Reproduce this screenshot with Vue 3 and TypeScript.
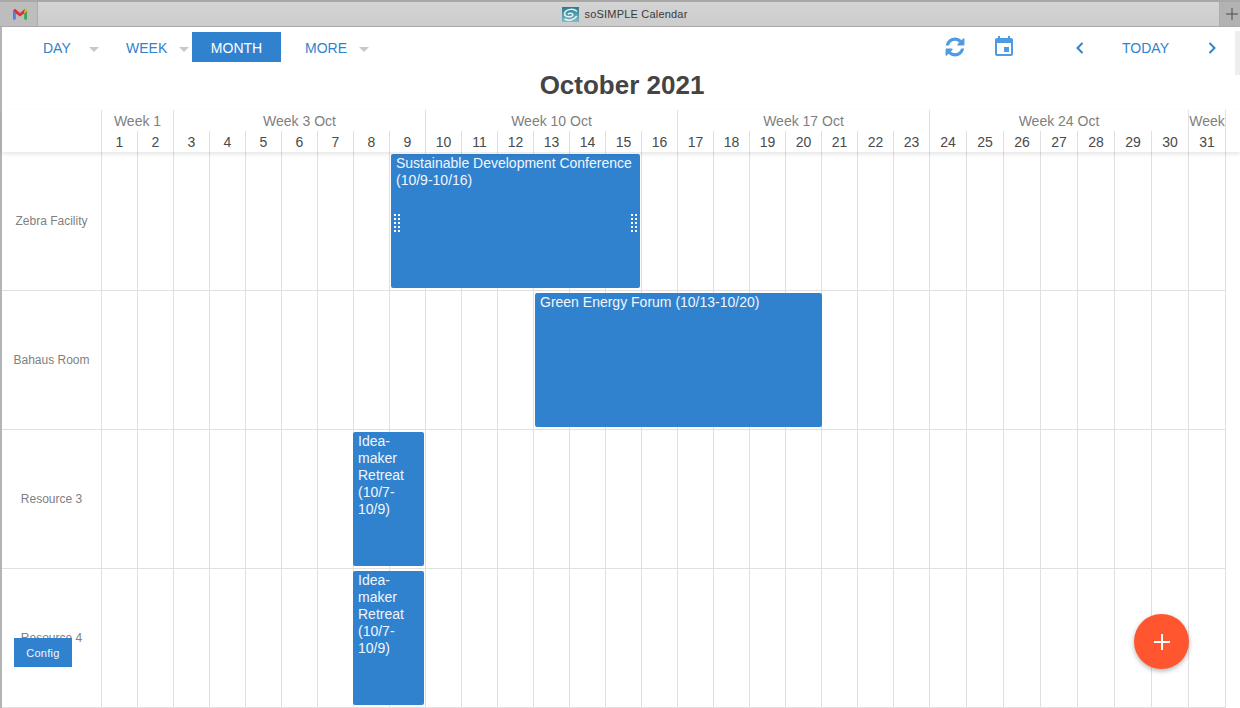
<script setup lang="ts">
type Day = { n: number; w: number };
type Week = { label: string; days: number };
type CalEvent = {
  title: string;
  start: number;
  span: number;
  left: number;
  right: number;
  grips?: boolean;
};
type Resource = { name: string; events: CalEvent[] };

// day columns: most are 36px, the last full week is 37px
const days: Day[] = Array.from({ length: 31 }, (_, i) => ({
  n: i + 1,
  w: i >= 23 ? 37 : 36,
}));

const weeks: Week[] = [
  { label: "Week 1", days: 2 },
  { label: "Week 3 Oct", days: 7 },
  { label: "Week 10 Oct", days: 7 },
  { label: "Week 17 Oct", days: 7 },
  { label: "Week 24 Oct", days: 7 },
  { label: "Week", days: 1 },
];

const retreat = "Idea-maker Retreat (10/7-10/9)";

const resources: Resource[] = [
  {
    name: "Zebra Facility",
    events: [
      {
        title: "Sustainable Development Conference (10/9-10/16)",
        start: 9,
        span: 7,
        left: 2,
        right: 1,
        grips: true,
      },
    ],
  },
  {
    name: "Bahaus Room",
    events: [{ title: "Green Energy Forum (10/13-10/20)", start: 13, span: 8, left: 2, right: -1 }],
  },
  {
    name: "Resource 3",
    events: [{ title: retreat, start: 8, span: 2, left: 0, right: 1 }],
  },
  {
    name: "Resource 4",
    events: [{ title: retreat, start: 8, span: 2, left: 0, right: 1 }],
  },
];

const dayColumns = days.map((d) => d.w + "px").join(" ");
const weekColumn = (i: number) => {
  const before = weeks.slice(0, i).reduce((sum, w) => sum + w.days, 0);
  return `${before + 1} / span ${weeks[i].days}`;
};
</script>

<template>
  <div class="window">
    <header class="titlebar">
      <div class="tab-icon">
        <svg width="16" height="14" viewBox="0 0 16 14">
          <path d="M1 3.5V12.5H3.8V6.5Z" fill="#4a80e8" />
          <path d="M15 3.5V12.5H12.2V6.5Z" fill="#34a853" />
          <path d="M1 3.5 3 1.8 8 6 13 1.8 12.2 6.5 8 9.5 3.8 6.5Z" fill="#dc3040" />
          <path d="M13 1.8 15 3.5 12.2 6.5Z" fill="#f4b400" />
        </svg>
      </div>
      <div class="title">
        <svg class="app-logo" width="17" height="15" viewBox="0 0 17 15">
          <defs>
            <linearGradient id="logo-bg" x1="0" y1="0" x2="0" y2="1">
              <stop offset="0" stop-color="#2c7a8e" />
              <stop offset="1" stop-color="#7fbcc8" />
            </linearGradient>
          </defs>
          <rect width="17" height="15" fill="url(#logo-bg)" />
          <path d="M15 4.5C12 1.5 5 1.5 2.8 5.5 1.5 9 5.5 10.5 9 9.5 11.5 8.7 11.5 6.5 9 6.2 7.5 6 6.5 6.6 6 7.2" fill="none" stroke="#e4f3f5" stroke-width="1.5" />
          <path d="M2.5 12C6 14 12 13.5 14.8 9" fill="none" stroke="#e4f3f5" stroke-width="1.5" />
        </svg>
        <span>soSIMPLE Calendar</span>
      </div>
      <div class="tab-add">
        <svg width="12" height="12" viewBox="0 0 12 12">
          <path d="M6 0V12M0 6H12" stroke="#4a4a4a" stroke-width="1" />
        </svg>
      </div>
    </header>

    <main class="page">
      <nav class="toolbar">
        <div class="views">
          <button class="view view-day">DAY<i class="caret"></i></button>
          <button class="view view-week">WEEK<i class="caret"></i></button>
          <button class="view view-month">MONTH</button>
          <button class="view view-more">MORE<i class="caret"></i></button>
        </div>
        <div class="actions">
          <svg class="icon-refresh" width="22" height="22" viewBox="0 0 1792 1792">
            <path
              fill="#4e9be3"
              d="M1639 1056q0 5-1 7-64 268-268 434.5t-478 166.5q-146 0-282.5-55t-243.5-157l-129 129q-19 19-45 19t-45-19-19-45v-448q0-26 19-45t45-19h448q26 0 45 19t19 45-19 45l-137 137q71 66 161 102t187 36q134 0 250-65t186-179q11-17 53-117 8-23 30-23h192q13 0 22.5 9.5t9.5 22.5zm25-800v448q0 26-19 45t-45 19h-448q-26 0-45-19t-19-45 19-45l138-138q-148-137-349-137-134 0-250 65t-186 179q-11 17-53 117-8 23-30 23h-199q-13 0-22.5-9.5t-9.5-22.5v-7q65-268 270-434.5t480-166.5q146 0 284 55.5t245 156.5l130-129q19-19 45-19t45 19 19 45z"
            />
          </svg>
          <svg class="icon-cal" width="24" height="24" viewBox="0 0 24 24">
            <path
              fill="#4e9be3"
              d="M17 12h-5v5h5v-5zM16 1v2H8V1H6v2H5c-1.11 0-1.99.9-1.99 2L3 19c0 1.1.89 2 2 2h14c1.1 0 2-.9 2-2V5c0-1.1-.9-2-2-2h-1V1h-2zm3 18H5V8h14v11z"
            />
          </svg>
          <svg class="chev" width="9" height="12" viewBox="0 0 9 12">
            <path d="M7.5 1 2.5 6 7.5 11" fill="none" stroke="#3182ce" stroke-width="2" />
          </svg>
          <button class="today">TODAY</button>
          <svg class="chev chev-next" width="9" height="12" viewBox="0 0 9 12">
            <path d="M1.5 1 6.5 6 1.5 11" fill="none" stroke="#3182ce" stroke-width="2" />
          </svg>
        </div>
        <div class="scroll-stub"></div>
      </nav>

      <h1 class="month-title">October 2021</h1>

      <section class="calendar">
        <div class="head">
          <div class="corner"></div>
          <div class="head-grid" :style="{ gridTemplateColumns: dayColumns }">
            <div
              v-for="(w, i) in weeks"
              :key="w.label"
              class="week"
              :style="{ gridColumn: weekColumn(i) }"
            >
              {{ w.label }}
            </div>
            <div v-for="d in days" :key="d.n" class="day">{{ d.n }}</div>
          </div>
        </div>

        <div v-for="r in resources" :key="r.name" class="row">
          <div class="resource">{{ r.name }}</div>
          <div class="row-grid" :style="{ gridTemplateColumns: dayColumns }">
            <div
              v-for="d in days"
              :key="d.n"
              class="cell"
              :style="{ gridColumn: d.n }"
            ></div>
            <div
              v-for="e in r.events"
              :key="e.title"
              class="event"
              :style="{
                gridColumn: `${e.start} / span ${e.span}`,
                marginLeft: e.left + 'px',
                marginRight: e.right + 'px',
              }"
            >
              {{ e.title }}
              <template v-if="e.grips">
                <span class="grip grip-l"></span>
                <span class="grip grip-r"></span>
              </template>
            </div>
          </div>
        </div>
      </section>

      <button class="config">Config</button>
      <button class="fab" aria-label="Add">
        <svg width="16" height="16" viewBox="0 0 16 16">
          <path d="M8 0V16M0 8H16" stroke="#fff" stroke-width="2" />
        </svg>
      </button>
    </main>
  </div>
</template>

<style scoped>
.window {
  width: 1240px;
  height: 708px;
  overflow: hidden;
  display: flex;
  flex-direction: column;
  font-family: "Liberation Sans", Arial, sans-serif;
  background: #b4b4b4;
}

.titlebar {
  height: 27px;
  flex: none;
  box-sizing: border-box;
  display: flex;
  align-items: center;
  border-top: 2px solid #a8a8a8;
  border-bottom: 1px solid #a9a9a9;
  background: linear-gradient(#d4d4d4, #cccccc);
}

.tab-icon {
  width: 38px;
  height: 100%;
  box-sizing: border-box;
  display: flex;
  align-items: center;
  justify-content: center;
  padding-left: 2px;
  background: #bdbdbd;
  border-right: 1px solid #adadad;
}

.title {
  flex: 1;
  display: flex;
  align-items: center;
  justify-content: center;
  gap: 5px;
  font-size: 11px;
  color: #3a3a3a;
  padding-right: 7px;
  letter-spacing: 0.2px;
}

.tab-add {
  width: 21px;
  height: 100%;
  display: flex;
  align-items: center;
  justify-content: center;
  padding-left: 3px;
  background: #b2b2b2;
  border-left: 1px solid #adadad;
  box-sizing: border-box;
}

.page {
  flex: 1;
  position: relative;
  min-height: 0;
  margin-left: 2px;
  background: #fff;
}

.toolbar {
  height: 41px;
  position: relative;
  display: flex;
  justify-content: space-between;
  padding-top: 5px;
  box-sizing: border-box;
}

.views {
  display: flex;
  height: 30px;
}

button {
  font-family: inherit;
  border: none;
  background: none;
  padding: 0;
  cursor: pointer;
}

.view {
  height: 30px;
  padding-top: 2px;
  font-size: 14px;
  color: #3182ce;
  display: flex;
  align-items: center;
  position: relative;
}

.view-day {
  width: 100px;
  padding-left: 41px;
}

.view-week {
  width: 90px;
  padding-left: 24px;
}

.view-month {
  width: 89px;
  justify-content: center;
  background: #3182ce;
  color: #fff;
}

.view-more {
  width: 90px;
  padding-left: 24px;
}

.caret {
  position: absolute;
  top: 15px;
  right: 3px;
  border-left: 5px solid transparent;
  border-right: 5px solid transparent;
  border-top: 5px solid #c8c8c8;
}

.view-more .caret {
  right: 2px;
}

.actions {
  display: flex;
  align-items: center;
  height: 30px;
}

.icon-refresh {
  margin-right: 26px;
}

.icon-cal {
  margin-right: 59px;
}

.chev {
  margin-top: 2px;
}

.today {
  font-size: 14px;
  color: #3182ce;
  width: 47px;
  margin: 2px 38px 0;
}

.chev-next {
  margin-left: 1px;
  margin-right: 23px;
}

.scroll-stub {
  position: absolute;
  right: 0;
  top: 4px;
  width: 5px;
  height: 44px;
  background: #eee;
}

.month-title {
  margin: 0;
  height: 42px;
  line-height: 35px;
  text-align: center;
  font-size: 26px;
  font-weight: 700;
  color: #444;
  padding-left: 2px;
}

.head {
  display: flex;
  height: 42px;
  background: #fff;
  position: relative;
  z-index: 1;
  box-shadow: 0 2px 4px rgba(0, 0, 0, 0.1);
}

.corner {
  width: 99px;
  flex: none;
}

.head-grid {
  display: grid;
  grid-template-rows: 21px 21px;
  border-right: 1px solid #e0e0e0;
}

.week {
  border-left: 1px solid #e0e0e0;
  font-size: 14px;
  line-height: 23px;
  color: #808080;
  text-align: center;
  white-space: nowrap;
  overflow: hidden;
}

.day {
  border-left: 1px solid #e0e0e0;
  font-size: 14px;
  line-height: 23px;
  color: #4a4a4a;
  text-align: center;
}

.row {
  display: flex;
  width: 1224px;
  height: 139px;
  border-bottom: 1px solid #e0e0e0;
  box-sizing: border-box;
  border-right: 1px solid #e0e0e0;
}

.resource {
  width: 99px;
  flex: none;
  display: flex;
  align-items: center;
  justify-content: center;
  font-size: 12px;
  color: #808080;
}

.row-grid {
  display: grid;
  grid-template-rows: 1fr;
}

.cell {
  grid-row: 1;
  border-left: 1px solid #e0e0e0;
}

.event {
  grid-row: 1;
  position: relative;
  margin-top: 2px;
  margin-bottom: 2px;
  padding: 1px 5px;
  border-radius: 2px;
  background: #3182ce;
  color: #f0f6fc;
  font-size: 14px;
  line-height: 17px;
  overflow: hidden;
}

.grip {
  position: absolute;
  top: 60px;
  width: 6px;
  height: 18px;
  background-image: linear-gradient(#fff 50%, transparent 50%);
  background-size: 4px 4px;
  -webkit-mask-image: linear-gradient(90deg, #000 50%, transparent 50%);
  mask-image: linear-gradient(90deg, #000 50%, transparent 50%);
  -webkit-mask-size: 4px 4px;
  mask-size: 4px 4px;
}

.grip-l {
  left: 3px;
}

.grip-r {
  right: 3px;
}

.config {
  position: absolute;
  left: 12px;
  top: 611px;
  width: 58px;
  height: 29px;
  background: #3182ce;
  color: #f0f6fc;
  font-size: 11px;
  letter-spacing: 0.3px;
}

.fab {
  position: absolute;
  left: 1132px;
  top: 587px;
  width: 55px;
  height: 55px;
  border-radius: 50%;
  background: #ff5630;
  display: flex;
  align-items: center;
  justify-content: center;
  box-shadow: 0 2px 5px rgba(0, 0, 0, 0.3);
}
</style>

<style>
html,
body {
  margin: 0;
  background: #fff;
}
</style>
